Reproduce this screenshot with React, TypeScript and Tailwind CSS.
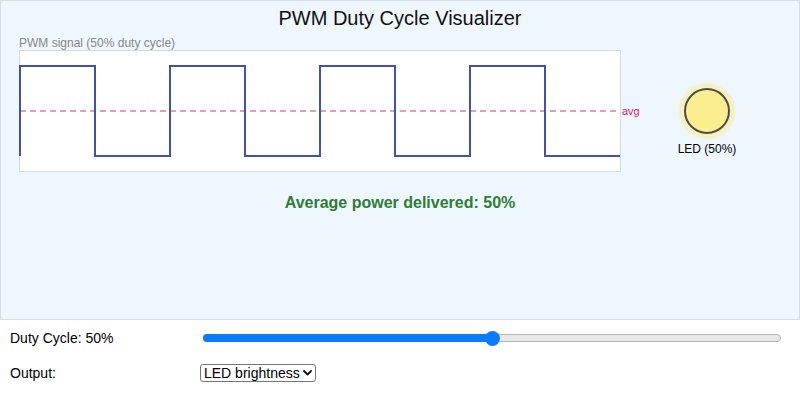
import React from "react";

const duty = 50;

function Wave() {
  const d =
    "M0 105 V15 H75 V105 H150 V15 H225 V105 H300 V15 H375 V105 H450 V15 H525 V105 H600";
  return (
    <svg
      width={600}
      height={120}
      viewBox="0 0 600 120"
      className="block overflow-visible bg-white border border-[#d9d9d9] box-content"
    >
      <line x1={0} y1={60} x2={600} y2={60} stroke="#e07ba0" strokeWidth={1.5} strokeDasharray="6 4" />
      <text x={602} y={63.5} fontSize={11} fill="#d81b60" fontFamily="Liberation Sans, Arial, sans-serif">
        avg
      </text>
      <path d={d} fill="none" stroke="#3f51b5" strokeWidth={2} />
    </svg>
  );
}

export default function App() {
  return (
    <div className="w-[800px] h-[402px] bg-white font-['Liberation_Sans',Arial,sans-serif] text-black overflow-hidden">
      <div className="h-[320px] border border-[#d6dde4] bg-[#eef6fe] pt-[5px] pl-[18px]">
        <h1 className="text-[20px] leading-[24px] text-center text-[#111] -ml-[18px]">PWM Duty Cycle Visualizer</h1>
        <div className="mt-[6px] text-[12px] leading-[14px] text-[#888]">PWM signal ({duty}% duty cycle)</div>
        <div className="flex items-start">
          <Wave />
          <div className="ml-[56px] mt-[38px] w-[60px] flex flex-col items-center">
            <div className="w-[46px] h-[46px] rounded-full border-2 border-[#4d4d4d] bg-[#fbee8e] shadow-[0_0_2px_5px_#f5f1c0]" />
            <div className="mt-[8px] text-[12px] leading-[14px] whitespace-nowrap">LED ({duty}%)</div>
          </div>
        </div>
        <div className="mt-[21px] -ml-[18px] text-center text-[16px] leading-[20px] font-bold text-[#2e7d32]">
          Average power delivered: {duty}%
        </div>
      </div>
      <div className="pt-[8px] pl-[10px]">
        <div className="flex items-center h-[20px]">
          <div className="w-[190px] text-[14px] leading-[20px]">Duty Cycle: {duty}%</div>
          <div className="ml-[3px] relative w-[578px] h-[8px] rounded-full border border-[#b4b4b4] bg-[#e8e8e8]">
            <div className="absolute -left-px -top-px h-[8px] w-[290px] rounded-full bg-[#0a7aff]" />
            <div className="absolute left-[281px] top-[-4.5px] w-[15px] h-[15px] rounded-full bg-[#0a7aff]" />
          </div>
        </div>
        <div className="flex items-center h-[20px] mt-[15px]">
          <div className="w-[190px] text-[14px] leading-[20px]">Output:</div>
          <div className="relative">
            <select
              defaultValue="led"
              className="appearance-none block w-[116px] h-[18px] border border-[#767676] rounded-[3px] bg-white pl-[3px] pr-[14px] py-0 text-[14px] leading-[16px] text-black font-['Liberation_Sans',Arial,sans-serif]"
            >
              <option value="led">LED brightness</option>
              <option value="motor">Motor speed</option>
            </select>
            <svg
              className="absolute right-[4px] top-[6px] pointer-events-none"
              width={9}
              height={6}
              viewBox="0 0 9 6"
            >
              <path d="M1 1 L4.5 4.5 L8 1" fill="none" stroke="#111" strokeWidth={1.8} strokeLinecap="round" strokeLinejoin="round" />
            </svg>
          </div>
        </div>
      </div>
    </div>
  );
}
